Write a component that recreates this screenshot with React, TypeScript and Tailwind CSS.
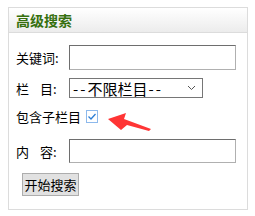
import React from "react";

const cjk = { fontFamily: '"Noto Sans CJK SC", "Liberation Sans", sans-serif' };

export default function App() {
  return (
    <div className="relative w-[255px] h-[216px] bg-white" style={cjk}>
      <div className="absolute left-[8px] top-[7px] w-[240px] h-[203px] border border-[#dcdcdc]">
        {/* header */}
        <div className="h-[25px] border-b border-[#dcdcdc] bg-gradient-to-b from-white to-[#ececec] flex items-center pl-[7px]">
          <span className="text-[14px] font-bold leading-none text-[#36700f]">高级搜索</span>
        </div>

        {/* body */}
        <div className="px-[7px] pt-[12px] text-[13px] text-black leading-none">
          <div className="flex items-center h-[25px]">
            <label className="w-[53px]">关键词:</label>
            <input
              type="text"
              className="w-[167px] h-[25px] border border-t-[#6e6e6e] border-l-[#6e6e6e] border-r-[#b0b0b0] border-b-[#b0b0b0] outline-none"
            />
          </div>

          <div className="flex items-center h-[20px] mt-[8px]">
            <label className="w-[53px] flex">
              <span className="w-[24px]">栏</span>
              <span>目:</span>
            </label>
            <div className="w-[134px] h-[20px] border border-[#767676] flex items-center justify-between pl-[3px] pr-[6px]">
              <span className="text-[15px] leading-none whitespace-nowrap">
                <span className="tracking-[2px]">--</span>不限栏目<span className="tracking-[2px] ml-[1px]">--</span>
              </span>
              <svg width="9" height="6" viewBox="0 0 9 6">
                <path d="M1 1 L4.5 4.5 L8 1" fill="none" stroke="#555" strokeWidth="1" />
              </svg>
            </div>
          </div>

          <div className="flex items-center h-[13px] mt-[12px]">
            <label>包含子栏目</label>
            <svg className="ml-[5px]" width="12" height="13" viewBox="0 0 12 13">
              <rect x="0.5" y="0.5" width="11" height="12" fill="white" stroke="#1a73d9" strokeDasharray="1 1" />
              <path d="M2.5 6.5 L5 9 L9.5 4" fill="none" stroke="#2e7fd6" strokeWidth="1.3" />
            </svg>
          </div>

          <div className="flex items-center h-[24px] mt-[16px]">
            <label className="w-[53px] flex">
              <span className="w-[24px]">内</span>
              <span>容:</span>
            </label>
            <input
              type="text"
              className="w-[167px] h-[24px] border border-t-[#6e6e6e] border-l-[#6e6e6e] border-r-[#b0b0b0] border-b-[#b0b0b0] outline-none"
            />
          </div>

          <button className="mt-[10px] ml-[6px] w-[57px] h-[23px] bg-[#e1e1e1] border border-[#adadad] text-[13px] leading-none text-black whitespace-nowrap flex items-center justify-center">
            开始搜索
          </button>
        </div>
      </div>

      {/* red pointer arrow */}
      <svg className="absolute left-0 top-0" width="255" height="216" viewBox="0 0 255 216">
        <polygon
          points="108,119 126,113 124,119 151,129 149,131 127,125 121,130"
          fill="#ff3535"
        />
      </svg>
    </div>
  );
}
